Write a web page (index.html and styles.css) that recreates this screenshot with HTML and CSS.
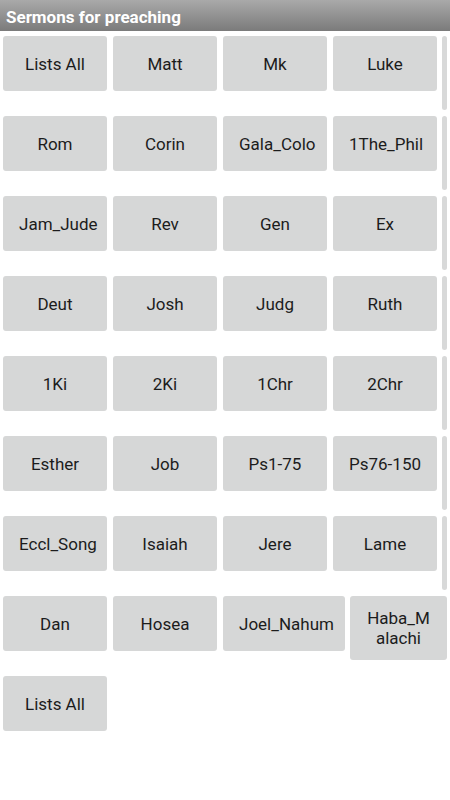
FILE: index.html
```html
<!DOCTYPE html>
<html lang="en">
<head>
  <meta charset="UTF-8" />
  <meta name="viewport" content="width=device-width, initial-scale=1.0" />
  <title>Sermons for preaching</title>
  <link rel="stylesheet" href="styles.css">
</head>
<body>
  <div class="title-bar">Sermons for preaching</div>
  <div class="book-list">
    <div class="row">
      <button class="book">Lists All</button>
      <button class="book">Matt</button>
      <button class="book">Mk</button>
      <button class="book">Luke</button>
      <div class="scroll-bar"></div>
    </div>
    <div class="row">
      <button class="book">Rom</button>
      <button class="book">Corin</button>
      <button class="book">Gala_Colo</button>
      <button class="book">1The_Phil</button>
      <div class="scroll-bar"></div>
    </div>
    <div class="row">
      <button class="book">Jam_Jude</button>
      <button class="book">Rev</button>
      <button class="book">Gen</button>
      <button class="book">Ex</button>
      <div class="scroll-bar"></div>
    </div>
    <div class="row">
      <button class="book">Deut</button>
      <button class="book">Josh</button>
      <button class="book">Judg</button>
      <button class="book">Ruth</button>
      <div class="scroll-bar"></div>
    </div>
    <div class="row">
      <button class="book">1Ki</button>
      <button class="book">2Ki</button>
      <button class="book">1Chr</button>
      <button class="book">2Chr</button>
      <div class="scroll-bar"></div>
    </div>
    <div class="row">
      <button class="book">Esther</button>
      <button class="book">Job</button>
      <button class="book">Ps1-75</button>
      <button class="book">Ps76-150</button>
      <div class="scroll-bar"></div>
    </div>
    <div class="row">
      <button class="book">Eccl_Song</button>
      <button class="book">Isaiah</button>
      <button class="book">Jere</button>
      <button class="book">Lame</button>
      <div class="scroll-bar"></div>
    </div>
    <div class="row">
      <button class="book">Dan</button>
      <button class="book">Hosea</button>
      <button class="book book-wide">Joel_Nahum</button>
      <button class="book book-wrap">Haba_Malachi</button>
    </div>
    <div class="row">
      <button class="book">Lists All</button>
    </div>
  </div>
</body>
</html>
```

FILE: styles.css
```css
body {
  margin: 0;
  font-family: Roboto, "Noto Sans", sans-serif;
  background-color: #ffffff;
}
.title-bar {
  height: 31px;
  line-height: 34px;
  padding-left: 6px;
  background: linear-gradient(#a9a9a9, #7b7b7b);
  color: #ffffff;
  font-size: 17px;
  font-weight: bold;
  overflow: hidden;
}
.book-list {
  padding: 5px 3px 0 3px;
}
.row {
  display: flex;
  align-items: flex-start;
  gap: 6px;
  height: 80px;
}
.book {
  width: 104px;
  height: 55px;
  flex: none;
  padding: 0 16px;
  border: none;
  border-radius: 3px;
  background-color: #d6d7d7;
  color: #1c1c1c;
  font-family: Roboto, "Noto Sans", sans-serif;
  font-size: 17px;
  line-height: 20px;
}
.book-wide {
  width: 122px;
}
.book-wrap {
  width: 97px;
  height: 64px;
  margin-left: -1px;
  word-break: break-all;
}
.scroll-bar {
  width: 5px;
  height: 74px;
  margin-left: -1px;
  border-radius: 3px;
  background-color: #d8d9d9;
}
```
